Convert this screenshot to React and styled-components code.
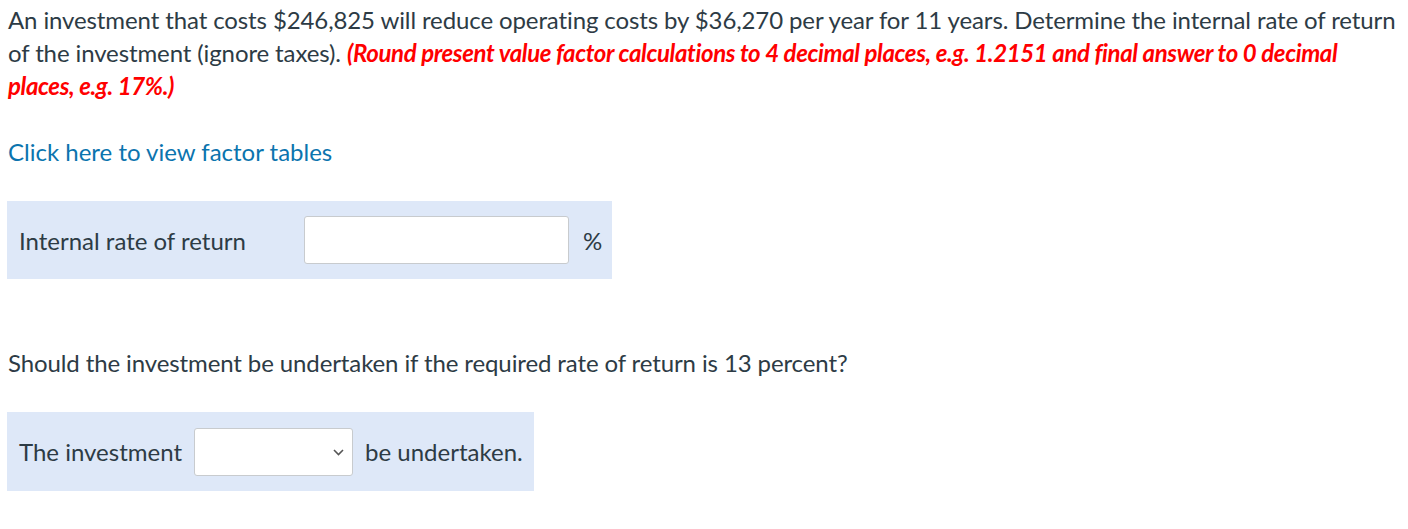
import React from 'react';
import styled, { createGlobalStyle } from 'styled-components';

const GlobalStyle = createGlobalStyle`
  body {
    margin: 0;
    background: #fff;
    font-family: Lato, "Open Sans", sans-serif;
    color: #2d3b45;
  }
`;

const Page = styled.div`
  padding: 3px 4px 20px 7px;
  font-size: 24px;
  line-height: 33px;
`;

const Question = styled.p`
  margin: 0 0 0 1px;
  letter-spacing: -0.11px;
`;

const Hint = styled.strong`
  color: #f00;
  font-style: italic;
  font-weight: 700;
  letter-spacing: -0.37px;
`;

const FactorLink = styled.a`
  display: inline-block;
  margin: 33px 0 0 1px;
  color: #0b74ae;
  text-decoration: none;
  cursor: pointer;
`;

const AnswerBox = styled.div`
  display: inline-flex;
  align-items: center;
  box-sizing: border-box;
  height: ${(p) => p.h}px;
  gap: ${(p) => p.gap || 12}px;
  margin-top: ${(p) => p.top}px;
  padding: 0 ${(p) => p.right || 12}px 0 12px;
  background: #dee8f8;
`;

const Row = styled.div``;

const Label = styled.span`
  min-width: ${(p) => p.width || 0}px;
`;

const TextInput = styled.input`
  box-sizing: border-box;
  width: 265px;
  height: 48px;
  border: 1px solid #c8cbce;
  border-radius: 3px;
  background: #fff;
  font: inherit;
  padding: 0 10px;
`;

const SelectWrap = styled.div`
  position: relative;
  width: 159px;
  height: 48px;
`;

const Select = styled.select`
  appearance: none;
  box-sizing: border-box;
  width: 100%;
  height: 100%;
  border: 1px solid #c8cbce;
  border-radius: 3px;
  background: #fff;
  font: inherit;
  padding: 0 10px;
`;

const Chevron = styled.svg`
  position: absolute;
  right: 9px;
  top: 21px;
  pointer-events: none;
`;

const SubQuestion = styled.p`
  margin: 67px 0 0 1px;
  letter-spacing: -0.11px;
`;

export default function App() {
  return (
    <>
      <GlobalStyle />
      <Page>
        <Question>
          An investment that costs $246,825 will reduce operating costs by $36,270 per year for 11 years. Determine the internal rate of return
          of the investment (ignore taxes).{' '}
          <Hint>
            (Round present value factor calculations to 4 decimal places, e.g. 1.2151 and final answer to 0 decimal places, e.g. 17%.)
          </Hint>
        </Question>

        <FactorLink>Click here to view factor tables</FactorLink>

        <Row>
          <AnswerBox h={78} top={33} gap={14} right={10}>
            <Label width={271}>Internal rate of return</Label>
            <TextInput type="text" />
            <span>%</span>
          </AnswerBox>
        </Row>

        <SubQuestion>Should the investment be undertaken if the required rate of return is 13 percent?</SubQuestion>

        <Row>
          <AnswerBox h={79} top={33} gap={12} right={11}>
            <Label>The investment</Label>
            <SelectWrap>
              <Select defaultValue="">
                <option value=""></option>
                <option value="should">should</option>
                <option value="should not">should not</option>
              </Select>
              <Chevron width="11" height="7" viewBox="0 0 11 7">
                <path d="M1 1l4.5 4.5L10 1" fill="none" stroke="#555" strokeWidth="1.6" />
              </Chevron>
            </SelectWrap>
            <span>be undertaken.</span>
          </AnswerBox>
        </Row>
      </Page>
    </>
  );
}
